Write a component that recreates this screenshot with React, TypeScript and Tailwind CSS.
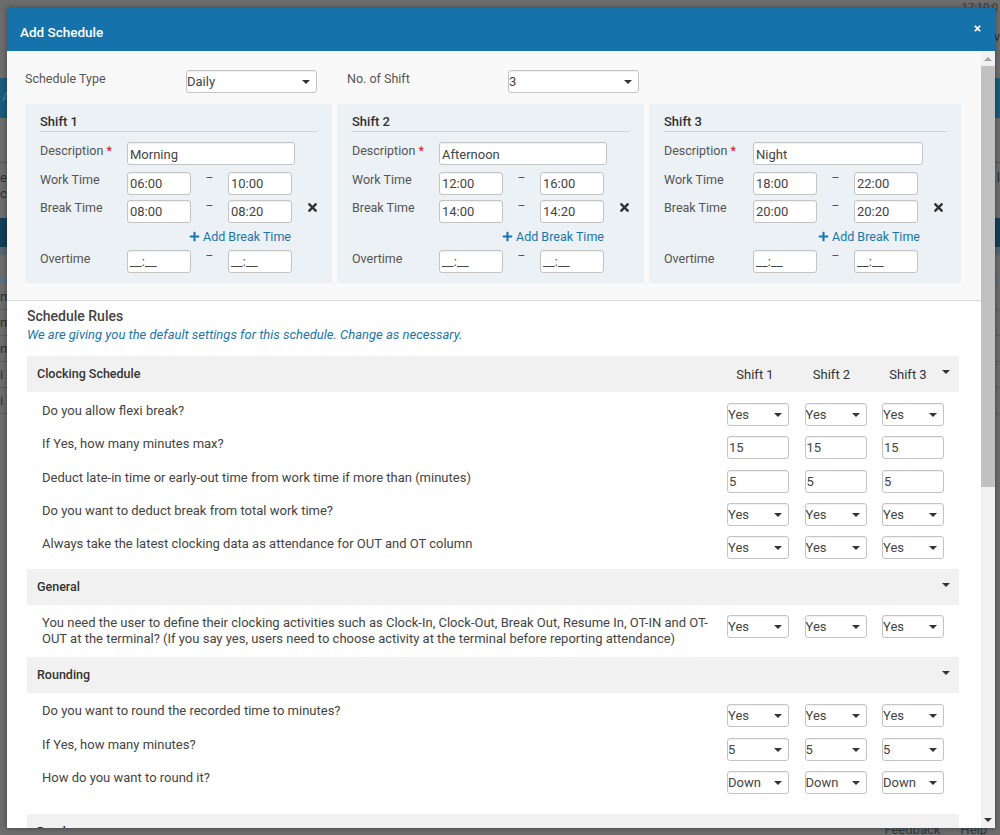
import React from "react";
import { FaTimes, FaPlus } from "react-icons/fa";

const font = "font-[family-name:Roboto,sans-serif]";
const field =
  "block h-[23px] rounded-[3px] border border-[#c4c4c4] bg-white text-[13px] leading-[21px] text-[#444] outline-none shadow-[inset_0_1px_1px_rgba(0,0,0,0.06)]";

function Caret({ className = "" }: { className?: string }) {
  return (
    <svg width="8" height="4" viewBox="0 0 8 4" className={className}>
      <path d="M0 0h8L4 4z" fill="#333" />
    </svg>
  );
}

function Select({ value, w = "w-[62px]" }: { value: string; w?: string }) {
  return (
    <div className={`relative ${w} shrink-0`}>
      <select defaultValue={value} className={`${field} w-full appearance-none pl-0`}>
        <option>{value}</option>
      </select>
      <Caret className="pointer-events-none absolute right-[7px] top-[10px]" />
    </div>
  );
}

function Input({ value, w = "w-[62px]" }: { value: string; w?: string }) {
  return <input readOnly value={value} className={`${field} ${w} shrink-0 pl-[1px]`} />;
}

function TimeRow({
  label,
  a,
  b,
  x,
  labelClass,
  className = "",
}: {
  label: string;
  a: string;
  b: string;
  x?: boolean;
  labelClass: string;
  className?: string;
}) {
  return (
    <div className={`flex items-start ${className}`}>
      <div className={`${labelClass} text-[12.5px] leading-[16px] text-[#555]`}>{label}</div>
      <input readOnly value={a} className={`${field} mt-[1px] w-[64px] pl-[2px]`} />
      <div className="w-[37px] text-center text-[12px] leading-[14px] text-[#555]">–</div>
      <input readOnly value={b} className={`${field} mt-[1px] w-[64px] pl-[2px]`} />
      {x && <FaTimes className="ml-[14px] mt-[2px] text-[13px] text-[#333]" />}
    </div>
  );
}

function ShiftCard({
  n,
  desc,
  w,
  labelW,
  inputW,
  ruleW,
  addW,
}: {
  n: number;
  desc: string;
  w: string;
  labelW: string;
  inputW: string;
  ruleW: string;
  addW: string;
}) {
  return (
    <div className={`${w} h-[179px] bg-[#ebf1f5] pl-[15px] pt-[10px]`}>
      <div className={`${ruleW} h-[18px] border-b border-[#cdd3d7] text-[13px] font-medium leading-[16px] text-[#333]`}>
        Shift {n}
      </div>
      <div className="mt-[10px] flex items-start">
        <div className={`${labelW} pt-[1px] text-[12.5px] leading-[16px] text-[#555]`}>
          Description <span className="text-[#e0102a]">*</span>
        </div>
        <input readOnly value={desc} className={`${field} ${inputW} pl-[2px] pt-[1px]`} />
      </div>
      <TimeRow
        label="Work Time"
        a={n === 1 ? "06:00" : n === 2 ? "12:00" : "18:00"}
        b={n === 1 ? "10:00" : n === 2 ? "16:00" : "22:00"}
        labelClass={`${labelW} pt-[1px]`}
        className="mt-[6px]"
      />
      <TimeRow
        label="Break Time"
        a={n === 1 ? "08:00" : n === 2 ? "14:00" : "20:00"}
        b={n === 1 ? "08:20" : n === 2 ? "14:20" : "20:20"}
        x
        labelClass={`${labelW} pt-[1px]`}
        className="mt-[4px]"
      />
      <div className={`${addW} mt-[5px] flex h-[17px] items-center justify-end text-[12.5px] leading-[16px] text-[#1c75ad]`}>
        <FaPlus className="mr-[3px] text-[11px]" />
        Add Break Time
      </div>
      <TimeRow
        label="Overtime"
        a="__:__"
        b="__:__"
        labelClass={`${labelW} pt-[2px]`}
        className="mt-[4px]"
      />
    </div>
  );
}

function Section({ title, shifts }: { title: string; shifts?: boolean }) {
  return (
    <div className="flex h-[36px] items-center bg-[#f1f1f1] pl-[10px] pr-[5px] pt-[1px] text-[12.5px] font-medium text-[#333]">
      <div className="flex-1">{title}</div>
      {shifts && (
        <div className="flex gap-[16.5px] text-[13px] font-normal">
          <div className="w-[60px] text-center">Shift 1</div>
          <div className="w-[60px] text-center">Shift 2</div>
          <div className="w-[60px] text-center">Shift 3</div>
        </div>
      )}
      <div className="flex w-[16px] justify-center pb-[5px]">
        <Caret />
      </div>
    </div>
  );
}

type Kind = "s" | "i";
function Row({
  label,
  value,
  kind = "s",
  labelPad = "pt-[1px]",
}: {
  label: string;
  value: string;
  kind?: Kind;
  labelPad?: string;
}) {
  return (
    <div className="flex h-[33.25px] items-start pl-[15px]">
      <div className={`${labelPad} w-[685px] text-[13px] leading-[14px] text-[#444]`}>{label}</div>
      <Controls value={value} kind={kind} />
    </div>
  );
}

function Controls({ value, kind }: { value: string; kind: Kind }) {
  const C = kind === "s" ? Select : Input;
  return (
    <div className="flex gap-[15.5px]">
      <C value={value} />
      <C value={value} />
      <C value={value} />
    </div>
  );
}

function PageRow({ letter }: { letter: string }) {
  return (
    <div className="h-[26px] border-b border-[#5c5c5c] text-[13px] leading-[25px] text-[#2f2f2f]">{letter}</div>
  );
}

export default function App() {
  return (
    <div className={`relative h-[835px] w-[1000px] overflow-hidden bg-[#6d6d6d] ${font}`}>
      {/* dimmed page behind the dialog */}
      <div className="flex h-full flex-col text-[13px] text-[#333]">
        <div className="pr-[2px] pt-[2px] text-right text-[11px] leading-[12px] text-[#3a3a3a]">17:10:0</div>
        <div className="mt-[16px] h-[14px] text-right text-[13px] leading-[14px] text-[#2f2f2f]">v</div>
        <div className="mt-[34px] h-[40px] bg-[#1c5b7f] pl-[2px] text-[13px] leading-[38px] text-[#4d7f9c]">A</div>
        <div className="mt-[44px] h-px bg-[#555]" />
        <div className="h-[55px] pt-[7px] text-[13px] leading-[16px] text-[#2f2f2f]">
          <div className="flex justify-between">
            <span>e</span>
            <span>l</span>
          </div>
          <div>c</div>
        </div>
        <div className="h-[29px] bg-[#143f59]" />
        <div className="h-[8px] bg-[#55666f]" />
        <div className="mt-[23px] h-[5px] bg-[#5a7080]" />
        <div className="mt-px">
          <PageRow letter="m" />
          <PageRow letter="m" />
          <PageRow letter="m" />
          <PageRow letter="i" />
          <PageRow letter="i" />
        </div>
        <div className="mt-auto flex justify-end gap-[20px] pr-[13px] text-[13px] leading-[10px] text-[#2a3a44]">
          <span>Feedback</span>
          <span>Help</span>
        </div>
      </div>

      {/* dialog */}
      <div className="absolute left-[7px] top-[8px] flex h-[820px] w-[988px] flex-col overflow-hidden bg-white shadow-[0_0_6px_rgba(0,0,0,0.4)]">
        <div className="flex h-[43px] shrink-0 items-center justify-between bg-[#1572ab] pl-[13px] pr-[13px] text-white">
          <div className="pt-[5px] text-[13.5px] font-medium">Add Schedule</div>
          <FaTimes className="mb-[3px] text-[9px]" />
        </div>
        <div className="flex min-h-0 flex-1">
          <div className="min-w-0 flex-1 overflow-hidden">
            {/* top form */}
            <div className="h-[250px] border-b border-[#d9d9d9] bg-[#f9f9f9] pl-[18px] pt-[19px]">
              <div className="flex items-start">
                <div className="w-[161px] pt-[1px] text-[12.5px] leading-[16px] text-[#555]">Schedule Type</div>
                <Select value="Daily" w="w-[131px]" />
                <div className="ml-[30px] w-[161px] pt-[1px] text-[12.5px] leading-[16px] text-[#555]">No. of Shift</div>
                <Select value="3" w="w-[131px]" />
              </div>
              <div className="mt-[11px] flex gap-[5px]">
                <ShiftCard n={1} desc="Morning" w="w-[307px]" labelW="w-[87px]" inputW="w-[168px]" ruleW="w-[277px]" addW="w-[251px]" />
                <ShiftCard n={2} desc="Afternoon" w="w-[307px]" labelW="w-[87px]" inputW="w-[168px]" ruleW="w-[277px]" addW="w-[252px]" />
                <ShiftCard n={3} desc="Night" w="w-[312px]" labelW="w-[89px]" inputW="w-[170px]" ruleW="w-[283px]" addW="w-[256px]" />
              </div>
            </div>
            {/* rules */}
            <div className="ml-[20px] w-[932px]">
              <div className="pt-[7px] text-[14px] font-medium leading-[17px] text-[#444]">Schedule Rules</div>
              <div className="pt-[1px] text-[13px] italic leading-[17px] text-[#1c75ad]">
                We are giving you the default settings for this schedule. Change as necessary.
              </div>
              <div className="mt-[13px]">
                <Section title="Clocking Schedule" shifts />
              </div>
              <div className="pt-[11px]">
                <Row label="Do you allow flexi break?" value="Yes" />
                <Row label="If Yes, how many minutes max?" value="15" kind="i" />
                <Row label="Deduct late-in time or early-out time from work time if more than (minutes)" value="5" kind="i" />
                <Row label="Do you want to deduct break from total work time?" value="Yes" />
                <Row label="Always take the latest clocking data as attendance for OUT and OT column" value="Yes" />
              </div>
              <Section title="General" />
              <div className="flex h-[52px] items-start pl-[15px] pt-[10px]">
                <div className="w-[685px] text-[13px] leading-[16px] text-[#444]">
                  You need the user to define their clocking activities such as Clock-In, Clock-Out, Break Out, Resume In, OT-IN and OT-OUT at the terminal? (If you say yes, users need to choose activity at the terminal before reporting attendance)
                </div>
                <Controls value="Yes" kind="s" />
              </div>
              <Section title="Rounding" />
              <div className="pt-[11px]">
                <Row label="Do you want to round the recorded time to minutes?" value="Yes" labelPad="pt-0" />
                <Row label="If Yes, how many minutes?" value="5" labelPad="pt-0" />
                <Row label="How do you want to round it?" value="Down" labelPad="pt-0" />
              </div>
              <div className="mt-[10px]">
                <Section title="Break" />
              </div>
            </div>
          </div>
          {/* scrollbar */}
          <div className="flex w-[14px] shrink-0 flex-col items-center bg-[#f1f1f1]">
            <svg width="8" height="4" viewBox="0 0 8 4" className="mt-[6px]">
              <path d="M4 0l4 4H0z" fill="#a3a3a3" />
            </svg>
            <div className="mt-[5px] h-[421px] w-full bg-[#c1c1c1]" />
            <div className="flex-1" />
            <Caret className="mb-[6px]" />
          </div>
        </div>
      </div>
    </div>
  );
}
